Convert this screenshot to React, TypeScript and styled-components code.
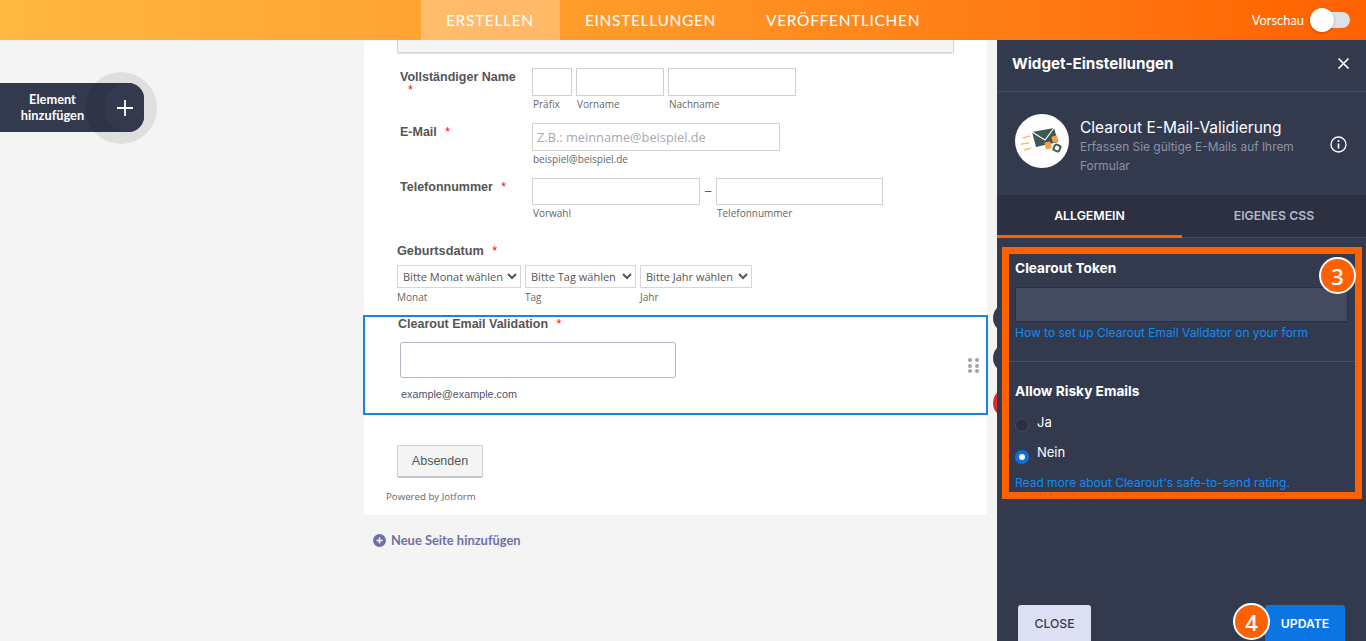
import styled, { createGlobalStyle } from "styled-components";

const GlobalStyle = createGlobalStyle`
  html, body {
    margin: 0;
    padding: 0;
    height: 100%;
    overflow: hidden;
    background: #f4f4f4;
  }
  * { box-sizing: border-box; }
`;

const Page = styled.div`
  width: 1366px;
  height: 641px;
  display: flex;
  flex-direction: column;
  overflow: hidden;
  font-family: "Inter", "Liberation Sans", sans-serif;
`;

/* top bar */
const TopBar = styled.header`
  height: 40px;
  flex: none;
  display: flex;
  align-items: stretch;
  padding-left: 421px;
  background: linear-gradient(90deg, #ffb842 0%, #ff9a2a 45%, #ff6100 100%);
`;

const NavTab = styled.div<{ $active?: boolean }>`
  display: flex;
  align-items: center;
  padding: 0 25px;
  min-width: ${(p) => (p.$active ? "139px" : "0")};
  font-family: "Lato", sans-serif;
  font-size: 15.5px;
  letter-spacing: 0.66px;
  color: #fff;
  background: ${(p) => (p.$active ? "rgba(255, 255, 255, 0.28)" : "transparent")};
`;

const PreviewBox = styled.div`
  margin-left: auto;
  padding-right: 16px;
  display: flex;
  align-items: center;
  gap: 6px;
  color: #fff;
  font-family: "Lato", sans-serif;
  font-size: 12.9px;
`;

const Toggle = styled.div`
  position: relative;
  width: 40px;
  height: 16px;
  border-radius: 8px;
  background: #dfe1ea;

  &::before {
    content: "";
    position: absolute;
    left: 0;
    top: -4px;
    width: 24px;
    height: 24px;
    border-radius: 50%;
    background: #fff;
    box-shadow: 0 1px 3px rgba(0, 0, 0, 0.25);
  }
`;

const Body = styled.div`
  flex: 1;
  min-height: 0;
  display: flex;
`;

/* left rail */
const Rail = styled.aside`
  width: 364px;
  flex: none;
  padding-top: 43px;
`;

const AddElement = styled.div`
  position: relative;
  width: 144px;
  height: 49px;
  background: #343a4e;
  border-radius: 0 16px 16px 0;
  display: flex;
  align-items: center;
`;

const AddLabel = styled.div`
  width: 105px;
  padding-bottom: 2px;
  text-align: center;
  color: #fff;
  font-family: "Lato", sans-serif;
  font-weight: 700;
  font-size: 12.8px;
  line-height: 16px;
`;

const Halo = styled.div`
  position: absolute;
  left: 85px;
  top: -11px;
  width: 72px;
  height: 72px;
  border-radius: 50%;
  background: rgba(0, 0, 0, 0.085);
`;

const PlusButton = styled.div`
  position: absolute;
  left: 105px;
  top: 0;
  width: 39px;
  height: 49px;
  border-radius: 24px 16px 16px 24px;
  background: #343a4e;
  display: flex;
  align-items: center;
  justify-content: center;
`;

/* form canvas */
const Canvas = styled.main`
  width: 623px;
  flex: none;
`;

const FormCard = styled.div`
  position: relative;
  height: 475px;
  background: #fff;
  font-family: "Liberation Sans", sans-serif;
  display: flex;
  flex-direction: column;
`;

const HeaderStub = styled.div`
  height: 13px;
  margin: 0 33px;
  background: #f5f5f5;
  border: 1px solid #d4d4d4;
  border-top: 0;
  border-radius: 0 0 2px 2px;
  box-shadow: 0 1px 1px rgba(0, 0, 0, 0.12);
`;

const FieldRow = styled.div<{ $top: number }>`
  display: flex;
  margin-top: ${(p) => p.$top}px;
  padding-left: 36px;
`;

const FieldLabel = styled.div`
  width: 132px;
  flex: none;
  padding-top: 2px;
  font-size: 12.5px;
  font-weight: 700;
  line-height: 15px;
  color: #555;
`;

const Star = styled.span`
  color: #f00;
  font-weight: 400;
  margin-left: 5px;
`;

const StarLine = styled.div`
  color: #f00;
  font-weight: 400;
  padding-left: 8px;
  line-height: 10px;
`;

const Inputs = styled.div`
  display: flex;
  gap: 4px;
`;

const InputCol = styled.div`
  display: flex;
  flex-direction: column;
`;

const TextBox = styled.input<{ $w: number; $h: number }>`
  width: ${(p) => p.$w}px;
  height: ${(p) => p.$h}px;
  border: 1px solid #cfcfcf;
  padding: 0 4px;
  margin: 0;
  font-family: "Open Sans", sans-serif;
  font-size: 12.8px;
  background: #fff;
  outline: none;

  &::placeholder {
    color: #a8a8b0;
  }
`;

const SubLabel = styled.div`
  margin-top: 2px;
  padding-left: 1px;
  font-family: "Open Sans", sans-serif;
  font-size: 10px;
  line-height: 13px;
  color: #666;
`;

const Dash = styled.div`
  width: 8px;
  padding-top: 6px;
  text-align: center;
  font-size: 12px;
  color: #555;
`;

const BirthBlock = styled.div`
  margin-top: 24px;
  padding-left: 33px;
`;

const BirthLabel = styled.div`
  font-size: 12.7px;
  font-weight: 700;
  line-height: 15px;
  color: #555;
`;

const SelectRow = styled.div`
  display: flex;
  gap: 4px;
  margin-top: 6px;
`;

const DateSelect = styled.select<{ $w: number }>`
  width: ${(p) => p.$w}px;
  height: 23px;
  border: 1px solid #d6d6d6;
  border-radius: 0;
  background: #fff;
  padding: 0 0 0 1px;
  font-family: "Open Sans", sans-serif;
  font-size: 11px;
  color: #555;
  outline: none;
`;

const DateLabel = styled(SubLabel)`
  margin-top: 3px;
  padding-left: 0;
`;

const SelectedField = styled.section`
  position: relative;
  margin: 11px -1px 0;
  height: 100px;
  border: 2px solid #1a82e6;
  padding: 0 0 0 33px;
`;

const SelectedLabel = styled.div`
  font-size: 12.5px;
  font-weight: 700;
  line-height: 15px;
  color: #555;
`;

const WidgetInput = styled.input`
  display: block;
  width: 276px;
  height: 36px;
  margin: 10px 0 0 2px;
  border: 1px solid #b2b6c6;
  border-radius: 3px;
  background: #fff;
  outline: none;
`;

const WidgetHint = styled.div`
  margin: 10px 0 0 3px;
  font-size: 10.8px;
  line-height: 13px;
  color: #4c5470;
`;

const DragDots = styled.div`
  position: absolute;
  right: 7px;
  top: 41px;
  display: grid;
  grid-template-columns: 4px 4px;
  gap: 1.5px 3px;

  span {
    width: 4px;
    height: 4px;
    border-radius: 50%;
    background: #9ea3b4;
  }
`;

const SideKnob = styled.div<{ $top: number; $color: string }>`
  position: absolute;
  right: -37px;
  top: ${(p) => p.$top}px;
  width: 30px;
  height: 30px;
  border-radius: 50%;
  background: ${(p) => p.$color};
`;

const SubmitButton = styled.button`
  display: block;
  width: 86px;
  height: 33px;
  margin: 30px 0 0 33px;
  padding: 0;
  border: 1px solid #cfcfcf;
  border-bottom: 2px solid #c4c4c4;
  border-radius: 2px;
  background: #f5f5f5;
  font-family: "Liberation Sans", sans-serif;
  font-size: 12.5px;
  color: #555;
`;

const Powered = styled.div`
  margin: 12px 0 0 22px;
  font-family: "Open Sans", sans-serif;
  font-size: 9.7px;
  line-height: 13px;
  color: #666;
`;

const AddPage = styled.div`
  display: flex;
  align-items: center;
  gap: 5px;
  margin: 18px 0 0 9px;
  font-family: "Lato", sans-serif;
  font-weight: 700;
  font-size: 12.9px;
  line-height: 14px;
  color: #6f70a8;
`;

/* settings panel */
const Panel = styled.aside`
  position: relative;
  width: 369px;
  margin-left: 10px;
  flex: none;
  background: #343a4e;
  color: #fff;
  display: flex;
  flex-direction: column;
  overflow: hidden;
`;

const PanelHeader = styled.div`
  height: 52px;
  flex: none;
  display: flex;
  align-items: center;
  justify-content: space-between;
  padding: 0 16px 5px 15px;
  border-bottom: 1px solid #474d62;
  font-size: 15.2px;
  font-weight: 700;
`;

const WidgetInfo = styled.div`
  height: 103px;
  flex: none;
  display: flex;
  padding: 22px 19px 0 18px;
`;

const WidgetLogo = styled.div`
  width: 54px;
  height: 54px;
  flex: none;
  border-radius: 50%;
  background: #fff;
  display: flex;
  align-items: center;
  justify-content: center;
`;

const WidgetText = styled.div`
  flex: 1;
  padding: 5px 0 0 11px;
`;

const WidgetTitle = styled.div`
  font-size: 15.5px;
  line-height: 18px;
  color: #fff;
`;

const WidgetDesc = styled.div`
  width: 240px;
  font-size: 11.9px;
  line-height: 19px;
  color: #8c92a6;
`;

const InfoWrap = styled.div`
  padding-top: 22px;
`;

const PanelTabs = styled.div`
  height: 43px;
  flex: none;
  display: flex;
  background: #2c3040;
  border-bottom: 1px solid #434859;
`;

const PanelTab = styled.div<{ $active?: boolean; $w: number }>`
  width: ${(p) => p.$w}px;
  margin-bottom: -1px;
  display: flex;
  align-items: center;
  justify-content: center;
  font-size: 12.3px;
  font-weight: 600;
  color: ${(p) => (p.$active ? "#fff" : "#b4b8c8")};
  border-bottom: 3px solid ${(p) => (p.$active ? "#ff6100" : "transparent")};
`;

const Frame = styled.div`
  position: relative;
  width: 360px;
  height: 252px;
  flex: none;
  margin: 9px 0 0 5px;
  border: 7px solid #ff6100;
  padding: 6px 0 0 6px;
`;

const StepBadge = styled.div`
  position: absolute;
  width: 37px;
  height: 37px;
  border-radius: 50%;
  border: 2px solid #fff;
  background: #ff6100;
  color: #fff;
  display: flex;
  align-items: center;
  justify-content: center;
  font-family: "Open Sans", sans-serif;
  font-weight: 600;
  font-size: 22px;
`;

const TokenBadge = styled(StepBadge)`
  right: -1px;
  top: 3px;
`;

const SettingLabel = styled.div`
  font-size: 13.7px;
  font-weight: 700;
  line-height: 16px;
`;

const TokenInput = styled.input`
  display: block;
  width: 333px;
  height: 35px;
  margin: 11px 0 0;
  background: #444a5f;
  border: 1px solid #2c3040;
  outline: none;
`;

const HelpLink = styled.a`
  display: block;
  font-size: 12px;
  line-height: 14px;
  color: #0f8bf5;
`;

const TokenLink = styled(HelpLink)`
  margin-top: 4px;
`;

const Divider = styled.div`
  height: 1px;
  margin: 21px 0 21px -6px;
  background: #4a4f62;
`;

const RadioRow = styled.div<{ $top: number }>`
  display: flex;
  align-items: flex-start;
  gap: 8px;
  margin-top: ${(p) => p.$top}px;
  font-size: 13px;
  line-height: 16px;
`;

const RadioMark = styled.div<{ $on?: boolean }>`
  width: 14px;
  height: 14px;
  margin-top: ${(p) => (p.$on ? "6px" : "4px")};
  flex: none;
  border-radius: 50%;
  background: ${(p) => (p.$on ? "#fff" : "#2c3040")};
  border: ${(p) => (p.$on ? "4px solid #0a6fe0" : "1px solid #454a5c")};
`;

const RiskLink = styled(HelpLink)`
  margin-top: 12px;
`;

const PanelFooter = styled.div`
  margin-top: auto;
  height: 36px;
  flex: none;
  display: flex;
  justify-content: space-between;
  padding: 0 21px;
`;

const FooterButton = styled.div<{ $primary?: boolean }>`
  position: relative;
  width: ${(p) => (p.$primary ? "80px" : "73px")};
  height: 40px;
  border-radius: 3px;
  display: flex;
  align-items: center;
  justify-content: center;
  padding-bottom: 4px;
  font-size: 12.2px;
  font-weight: ${(p) => (p.$primary ? 600 : 500)};
  background: ${(p) => (p.$primary ? "#0a75e3" : "#dce0f2")};
  color: ${(p) => (p.$primary ? "#fff" : "#343a4e")};
`;

const UpdateBadge = styled(StepBadge)`
  left: -32px;
  top: -2px;
`;

function EnvelopeLogo() {
  return (
    <svg width="42" height="34" viewBox="0 0 42 34">
      <path d="M2 14l7-2M0 20l8-1M3 26l7-2" stroke="#f8bd6e" strokeWidth="1.4" fill="none" />
      <path d="M11 8L33 4l4 14-22 5z" fill="#3e5750" />
      <path d="M11 8l13 8 9-12" fill="none" stroke="#fff" strokeWidth="1.2" />
      <rect x="24" y="18" width="6" height="7" rx="1" fill="#f3a24b" transform="rotate(-15 27 21)" />
      <rect x="31" y="12" width="6" height="6" rx="1" fill="#f3a24b" transform="rotate(-15 34 15)" />
      <rect x="33" y="21" width="6" height="6" rx="1.5" fill="#fff" stroke="#3e5750" strokeWidth="2" transform="rotate(25 36 24)" />
    </svg>
  );
}

function PlusIcon() {
  return (
    <svg width="18" height="18" viewBox="0 0 18 18">
      <path d="M9 1v16M1 9h16" stroke="#fff" strokeWidth="1.8" fill="none" />
    </svg>
  );
}

function CloseIcon() {
  return (
    <svg width="13" height="13" viewBox="0 0 13 13">
      <path d="M1.5 1.5l10 10M11.5 1.5l-10 10" stroke="#fff" strokeWidth="1.7" fill="none" />
    </svg>
  );
}

function InfoIcon() {
  return (
    <svg width="17" height="17" viewBox="0 0 17 17">
      <circle cx="8.5" cy="8.5" r="7.5" stroke="#fff" strokeWidth="1.3" fill="none" />
      <circle cx="8.5" cy="5" r="1" fill="#fff" />
      <path d="M8.5 7.5v5" stroke="#fff" strokeWidth="1.6" />
    </svg>
  );
}

function AddPageIcon() {
  return (
    <svg width="13" height="13" viewBox="0 0 13 13">
      <circle cx="6.5" cy="6.5" r="6.5" fill="#6f70a8" />
      <path d="M6.5 3.5v6M3.5 6.5h6" stroke="#fff" strokeWidth="1.4" />
    </svg>
  );
}

export default function App() {
  return (
    <Page>
      <GlobalStyle />
      <TopBar>
        <NavTab $active>ERSTELLEN</NavTab>
        <NavTab>EINSTELLUNGEN</NavTab>
        <NavTab>VERÖFFENTLICHEN</NavTab>
        <PreviewBox>
          Vorschau
          <Toggle />
        </PreviewBox>
      </TopBar>

      <Body>
        <Rail>
          <AddElement>
            <AddLabel>
              Element
              <br />
              hinzufügen
            </AddLabel>
            <Halo />
            <PlusButton>
              <PlusIcon />
            </PlusButton>
          </AddElement>
        </Rail>

        <Canvas>
          <FormCard>
            <HeaderStub />

            <FieldRow $top={15}>
              <FieldLabel>
                Vollständiger Name
                <StarLine>*</StarLine>
              </FieldLabel>
              <Inputs>
                <InputCol>
                  <TextBox $w={40} $h={28} />
                  <SubLabel>Präfix</SubLabel>
                </InputCol>
                <InputCol>
                  <TextBox $w={88} $h={28} />
                  <SubLabel>Vorname</SubLabel>
                </InputCol>
                <InputCol>
                  <TextBox $w={128} $h={28} />
                  <SubLabel>Nachname</SubLabel>
                </InputCol>
              </Inputs>
            </FieldRow>

            <FieldRow $top={12}>
              <FieldLabel>
                E-Mail <Star>*</Star>
              </FieldLabel>
              <InputCol>
                <TextBox $w={248} $h={28} placeholder="Z.B.: meinname@beispiel.de" />
                <SubLabel>beispiel@beispiel.de</SubLabel>
              </InputCol>
            </FieldRow>

            <FieldRow $top={12}>
              <FieldLabel>
                Telefonnummer <Star>*</Star>
              </FieldLabel>
              <Inputs>
                <InputCol>
                  <TextBox $w={168} $h={27} />
                  <SubLabel>Vorwahl</SubLabel>
                </InputCol>
                <Dash>–</Dash>
                <InputCol>
                  <TextBox $w={167} $h={27} />
                  <SubLabel>Telefonnummer</SubLabel>
                </InputCol>
              </Inputs>
            </FieldRow>

            <BirthBlock>
              <BirthLabel>
                Geburtsdatum <Star>*</Star>
              </BirthLabel>
              <SelectRow>
                <InputCol>
                  <DateSelect $w={124}>
                    <option>Bitte Monat wählen</option>
                  </DateSelect>
                  <DateLabel>Monat</DateLabel>
                </InputCol>
                <InputCol>
                  <DateSelect $w={111}>
                    <option>Bitte Tag wählen</option>
                  </DateSelect>
                  <DateLabel>Tag</DateLabel>
                </InputCol>
                <InputCol>
                  <DateSelect $w={112}>
                    <option>Bitte Jahr wählen</option>
                  </DateSelect>
                  <DateLabel>Jahr</DateLabel>
                </InputCol>
              </SelectRow>
            </BirthBlock>

            <SelectedField>
              <SelectedLabel>
                Clearout Email Validation <Star>*</Star>
              </SelectedLabel>
              <WidgetInput />
              <WidgetHint>example@example.com</WidgetHint>
              <DragDots>
                <span />
                <span />
                <span />
                <span />
                <span />
                <span />
              </DragDots>
              <SideKnob $top={-14} $color="#343a4e" />
              <SideKnob $top={26} $color="#343a4e" />
              <SideKnob $top={71} $color="#e02b2b" />
            </SelectedField>

            <SubmitButton>Absenden</SubmitButton>
            <Powered>Powered by Jotform</Powered>
          </FormCard>

          <AddPage>
            <AddPageIcon />
            Neue Seite hinzufügen
          </AddPage>
        </Canvas>

        <Panel>
          <PanelHeader>
            Widget-Einstellungen
            <CloseIcon />
          </PanelHeader>

          <WidgetInfo>
            <WidgetLogo>
              <EnvelopeLogo />
            </WidgetLogo>
            <WidgetText>
              <WidgetTitle>Clearout E-Mail-Validierung</WidgetTitle>
              <WidgetDesc>Erfassen Sie gültige E-Mails auf Ihrem Formular</WidgetDesc>
            </WidgetText>
            <InfoWrap>
              <InfoIcon />
            </InfoWrap>
          </WidgetInfo>

          <PanelTabs>
            <PanelTab $active $w={185}>
              ALLGEMEIN
            </PanelTab>
            <PanelTab $w={184}>EIGENES CSS</PanelTab>
          </PanelTabs>

          <Frame>
            <TokenBadge>3</TokenBadge>
            <SettingLabel>Clearout Token</SettingLabel>
            <TokenInput />
            <TokenLink>How to set up Clearout Email Validator on your form</TokenLink>
            <Divider />
            <SettingLabel>Allow Risky Emails</SettingLabel>
            <RadioRow $top={15}>
              <RadioMark />
              Ja
            </RadioRow>
            <RadioRow $top={12}>
              <RadioMark $on />
              Nein
            </RadioRow>
            <RiskLink>Read more about Clearout's safe-to-send rating.</RiskLink>
          </Frame>

          <PanelFooter>
            <FooterButton>CLOSE</FooterButton>
            <FooterButton $primary>
              <UpdateBadge>4</UpdateBadge>
              UPDATE
            </FooterButton>
          </PanelFooter>
        </Panel>
      </Body>
    </Page>
  );
}
